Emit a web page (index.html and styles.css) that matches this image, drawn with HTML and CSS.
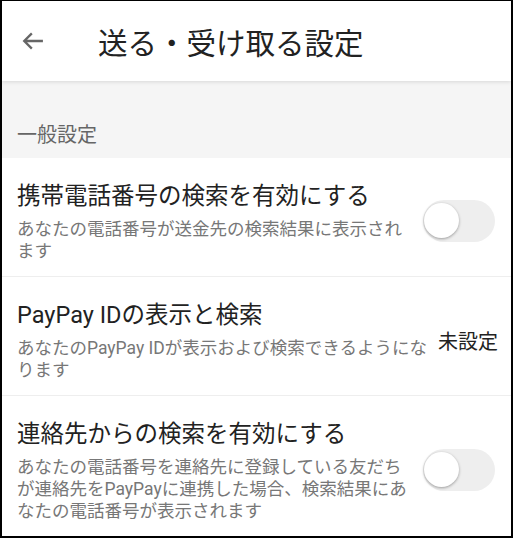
FILE: index.html
```html
<!DOCTYPE html>
<html lang="ja">
<head>
    <meta charset="UTF-8">
    <meta name="viewport" content="width=device-width, initial-scale=1.0">
    <title>送る・受け取る設定</title>
    <link rel="stylesheet" href="styles.css">
</head>
<body>

<div class="screen">
    <div class="app-bar">
        <svg class="back-icon" width="28" height="28" viewBox="0 0 24 24">
            <path d="M20.5 12H4.5M11 5.5L4.5 12l6.5 6.5" fill="none" stroke="#666" stroke-width="2"/>
        </svg>
        <h1 class="page-title">送る・受け取る設定</h1>
    </div>

    <div class="section-head">一般設定</div>

    <div class="setting-row">
        <div class="setting-text">
            <div class="setting-title">携帯電話番号の検索を有効にする</div>
            <div class="setting-desc">あなたの電話番号が送金先の検索結果に表示されます</div>
        </div>
        <div class="toggle"><span class="knob"></span></div>
    </div>

    <div class="setting-row">
        <div class="setting-text">
            <div class="setting-title">PayPay IDの表示と検索</div>
            <div class="setting-desc">あなたのPayPay IDが表示および検索できるようになります</div>
        </div>
        <div class="setting-value">未設定</div>
    </div>

    <div class="setting-row last">
        <div class="setting-text">
            <div class="setting-title">連絡先からの検索を有効にする</div>
            <div class="setting-desc">あなたの電話番号を連絡先に登録している友だちが連絡先をPayPayに連携した場合、検索結果にあなたの電話番号が表示されます</div>
        </div>
        <div class="toggle"><span class="knob"></span></div>
    </div>
</div>

</body>
</html>
```

FILE: styles.css
```css
/* Alap */
body {
    margin: 0;
    font-family: Roboto, "Noto Sans CJK JP", sans-serif;
    background-color: #fff;
}

.screen {
    width: 509px;
    height: 535px;
    border: 2px solid #000;
    border-top-width: 1px;
    overflow: hidden;
    background-color: #fff;
}

.app-bar {
    height: 80px;
    display: flex;
    align-items: center;
    background-color: #fff;
    box-shadow: 0 1px 4px rgba(0, 0, 0, 0.12);
    position: relative;
}

.back-icon {
    margin-left: 17px;
    margin-right: 51px;
}

.page-title {
    margin: 0;
    font-size: 29.5px;
    font-weight: normal;
    color: #222;
}

.section-head {
    height: 77px;
    box-sizing: border-box;
    padding: 40px 15px 0;
    background-color: #f5f5f5;
    font-size: 20px;
    line-height: 28px;
    color: #666;
}

.setting-row {
    display: flex;
    align-items: center;
    padding: 22px 16px 14px 15px;
    border-bottom: 1px solid #eee;
}

.setting-row.last {
    border-bottom: none;
}

.setting-text {
    flex: 1;
    min-width: 0;
}

.setting-title {
    font-size: 23.5px;
    line-height: 32px;
    color: #222;
}

.setting-desc {
    margin-top: 6px;
    font-size: 17.5px;
    line-height: 22px;
    color: #777;
    padding-right: 2px;
}

.setting-value {
    margin-left: 6px;
    margin-right: -3px;
    font-size: 20px;
    color: #222;
    white-space: nowrap;
}

.toggle {
    width: 72px;
    height: 42px;
    margin-left: 10px;
    border-radius: 21px;
    background-color: #eee;
    position: relative;
    flex-shrink: 0;
}

.knob {
    position: absolute;
    top: 3px;
    left: 1px;
    width: 35px;
    height: 35px;
    border-radius: 50%;
    background-color: #fff;
    box-shadow: 0 1px 3px rgba(0, 0, 0, 0.35);
}
```
